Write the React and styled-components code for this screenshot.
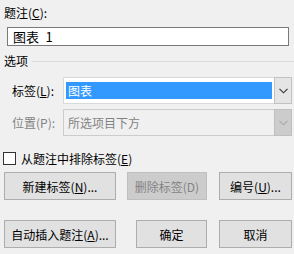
import React from "react";
import styled, { createGlobalStyle } from "styled-components";

const GlobalStyle = createGlobalStyle`
  html, body {
    margin: 0;
    padding: 0;
    background: #f0f0f0;
  }
  body {
    font-family: "Noto Sans CJK SC", "Noto Sans", sans-serif;
    font-size: 12px;
    color: #000;
  }
`;

const Dialog = styled.div`
  width: 294px;
  height: 254px;
  box-sizing: border-box;
  background: #f0f0f0;
  display: flex;
  flex-direction: column;
  padding: 4px 2px 0 4px;
`;

const Label = styled.div`
  height: 18px;
  line-height: 18px;
  color: ${(p) => (p.$disabled ? "#838383" : "#000")};
  white-space: nowrap;
`;

const U = styled.span`
  text-decoration: underline;
  text-underline-offset: 1px;
`;

const TextBox = styled.div`
  margin: 5px 3px 0 3px;
  height: 19px;
  box-sizing: border-box;
  border: 1px solid #7a7a7a;
  background: #fff;
  padding-left: 5px;
  line-height: 17px;
  font-size: 13px;
  white-space: pre;
`;

const GroupTitle = styled.div`
  margin-top: 8px;
  display: flex;
  align-items: center;
  gap: 4px;
  height: 14px;
  line-height: 14px;

  &::after {
    content: "";
    flex: 1;
    height: 1px;
    background: #dcdcdc;
    margin-right: -2px;
  }
`;

const FieldRow = styled.div`
  display: flex;
  align-items: center;
  margin-top: ${(p) => p.$top}px;
  padding-left: 8px;
`;

const FieldLabel = styled(Label)`
  width: 51px;
`;

const Combo = styled.div`
  flex: 1;
  display: flex;
  height: 27px;
  box-sizing: border-box;
  border: 1px solid ${(p) => (p.$disabled ? "#cccccc" : "#d9d9d9")};
  background: ${(p) => (p.$disabled ? "#f0f0f0" : "#fff")};
`;

const ComboValue = styled.div`
  flex: 1;
  margin: 4px 2px;
  padding-left: 2px;
  line-height: 17px;
  background: ${(p) => (p.$selected ? "#3399ff" : "transparent")};
  color: ${(p) => (p.$selected ? "#fff" : p.$disabled ? "#838383" : "#000")};
  white-space: nowrap;
`;

const ComboButton = styled.div`
  width: 16px;
  margin: -1px -1px -1px 0;
  display: flex;
  align-items: center;
  justify-content: center;
  background: ${(p) => (p.$disabled ? "#cccccc" : "#e5e5e5")};
  border: 1px solid ${(p) => (p.$disabled ? "#bfbfbf" : "#c2c2c2")};
`;

const CheckRow = styled.div`
  display: flex;
  align-items: center;
  gap: 5px;
  margin-top: 15px;
  height: 14px;
`;

const Box = styled.span`
  width: 11px;
  height: 11px;
  border: 1px solid #333;
  background: #fff;
  margin-left: -1px;
`;

const ButtonRow = styled.div`
  display: flex;
  margin-top: ${(p) => p.$top}px;
`;

const Button = styled.div`
  width: ${(p) => p.$w}px;
  margin-left: ${(p) => p.$ml || 0}px;
  height: 28px;
  box-sizing: border-box;
  border: 1px solid ${(p) => (p.$disabled ? "#bfbfbf" : "#adadad")};
  background: ${(p) => (p.$disabled ? "#cccccc" : "#e1e1e1")};
  color: ${(p) => (p.$disabled ? "#838383" : "#000")};
  display: flex;
  align-items: center;
  justify-content: center;
  white-space: nowrap;
`;

const Chevron = ({ color }) => (
  <svg width="9" height="6" viewBox="0 0 9 6">
    <path d="M0.5 0.8 L4.5 4.8 L8.5 0.8" fill="none" stroke={color} strokeWidth="1.1" />
  </svg>
);

export default function App() {
  return (
    <>
      <GlobalStyle />
      <Dialog>
        <Label>
          题注(<U>C</U>):
        </Label>
        <TextBox>{"图表\u20021"}</TextBox>
        <GroupTitle>选项</GroupTitle>

        <FieldRow $top={9}>
          <FieldLabel>
            标签(<U>L</U>):
          </FieldLabel>
          <Combo>
            <ComboValue $selected>图表</ComboValue>
            <ComboButton>
              <Chevron color="#333" />
            </ComboButton>
          </Combo>
        </FieldRow>

        <FieldRow $top={5}>
          <FieldLabel $disabled>位置(P):</FieldLabel>
          <Combo $disabled>
            <ComboValue $disabled>所选项目下方</ComboValue>
            <ComboButton $disabled>
              <Chevron color="#a8a8a8" />
            </ComboButton>
          </Combo>
        </FieldRow>

        <CheckRow>
          <Box />
          <span>
            从题注中排除标签(<U>E</U>)
          </span>
        </CheckRow>

        <ButtonRow $top={7}>
          <Button $w={112}>
            新建标签(<U>N</U>)...
          </Button>
          <Button $w={80} $ml={11} $disabled>
            删除标签(D)
          </Button>
          <Button $w={73} $ml={12}>
            编号(<U>U</U>)...
          </Button>
        </ButtonRow>

        <ButtonRow $top={20}>
          <Button $w={112}>
            自动插入题注(<U>A</U>)...
          </Button>
          <Button $w={71} $ml={20}>
            确定
          </Button>
          <Button $w={73} $ml={12}>
            取消
          </Button>
        </ButtonRow>
      </Dialog>
    </>
  );
}
